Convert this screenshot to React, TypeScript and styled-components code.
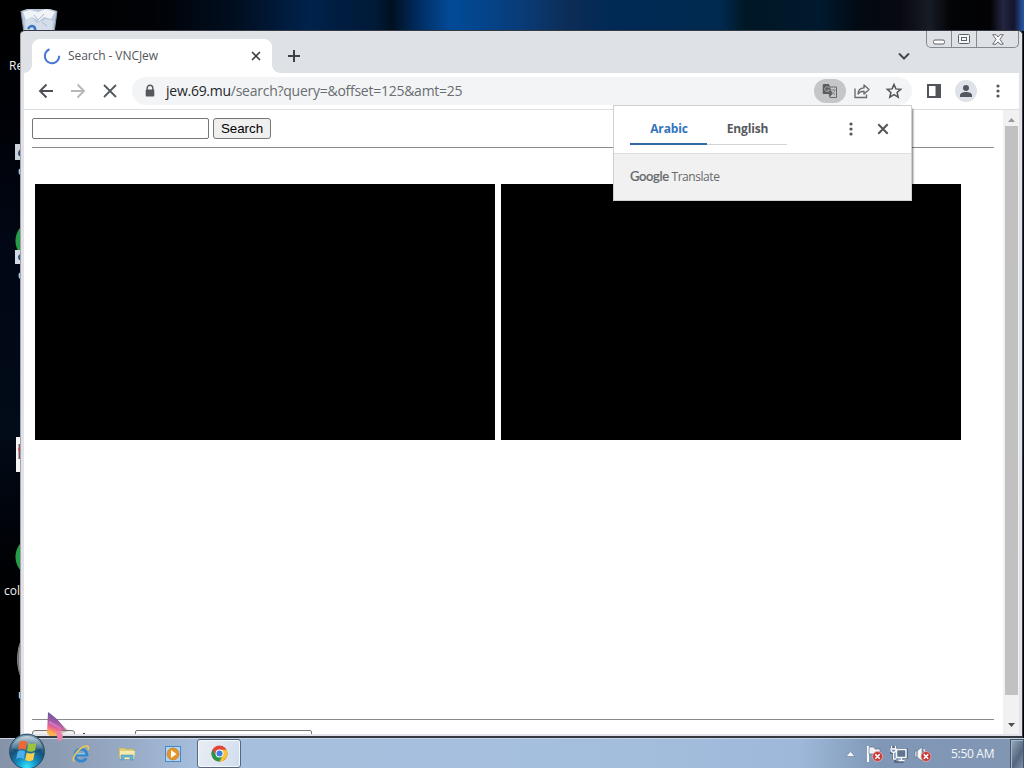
import React from "react";
import styled, { createGlobalStyle } from "styled-components";

const Global = createGlobalStyle`
  * { box-sizing: border-box; }
  body { margin: 0; overflow: hidden; font-family: "Open Sans", "Noto Sans", sans-serif; }
  svg { display: block; flex: none; }
`;

const Desktop = styled.div`
  position: relative;
  width: 1024px;
  height: 768px;
  overflow: hidden;
  display: flex;
  flex-direction: column;
  justify-content: flex-end;
  background:
    linear-gradient(90deg, #000 0, #000205 150px, #010e20 235px, #00224c 310px, #001d40 340px, #001a38 375px, #001020 392px, #003068 422px, #034a96 450px, #03458d 480px, #093c78 520px, #0c2c56 570px, #002a55 610px, #012a4f 720px, #001726 745px, #00192d 820px, #020a12 860px, #080810 900px, #171c24 930px, #030406 950px, #020204 990px, #242540 1003px, #14142c 1014px, #2453a0 1023px) 0 0 / 1024px 31px no-repeat,
    linear-gradient(#000 0, #000106 110px, #010714 240px, #020b18 430px, #000309 530px, #000 600px);
`;

const Shortcut = styled.div<{ $x: number; $y: number }>`
  position: absolute;
  left: ${p => p.$x}px;
  top: ${p => p.$y}px;
  color: #f4f4f4;
  font-size: 12px;
  line-height: 16px;
  white-space: nowrap;
`;

const Window = styled.div`
  position: absolute;
  left: 20px;
  top: 30px;
  width: 1003px;
  height: 708px;
  display: flex;
  flex-direction: column;
  padding: 1px 3px 2px 3px;
  background: #e2e3ea;
  border: solid #34393f;
  border-width: 1px 1px 2px 0;
  border-left: 1px solid #a2a4aa;
  border-radius: 5px 5px 0 0;
`;

const TabStrip = styled.div`
  height: 41px;
  flex: none;
  margin: 0 -3px;
  padding: 7px 0 0 11px;
  display: flex;
  background: #dee1e6;
  border-radius: 4px 4px 0 0;
`;

const Tab = styled.div`
  position: relative;
  width: 240px;
  height: 34px;
  border-radius: 8px 8px 0 0;
  background: #fff;
  display: flex;
  align-items: center;
  padding: 0 10px 0 11px;
  color: #53565a;
  font-size: 12px;
  &::before, &::after {
    content: "";
    position: absolute;
    bottom: 0;
    width: 8px;
    height: 8px;
  }
  &::before { left: -8px; background: radial-gradient(circle at 0 0, transparent 7.5px, #fff 8px); }
  &::after { right: -8px; background: radial-gradient(circle at 100% 0, transparent 7.5px, #fff 8px); }
`;

const TabTitle = styled.span`
  flex: 1;
  margin-left: 7px;
  padding-bottom: 1px;
  letter-spacing: -0.08px;
`;

const NewTab = styled.div`
  margin: 10px 0 0 15px;
`;

const TabSearch = styled.div`
  margin: 11px 15px 0 auto;
  width: 14px;
`;

const CaptionButtons = styled.div`
  display: flex;
  width: 93px;
  height: 17px;
  margin: -8px 3px 0 0;
  border: 1px solid #858990;
  border-top: 0;
  border-radius: 0 0 5px 5px;
`;

const CaptionButton = styled.div<{ $w: number }>`
  width: ${p => p.$w}px;
  display: flex;
  justify-content: center;
  align-items: center;
  & + & { border-left: 1px solid #858990; }
`;

const Toolbar = styled.div`
  height: 37px;
  flex: none;
  display: flex;
  align-items: center;
  background: #fff;
  border-bottom: 1px solid #dcdee2;
  padding: 0 19px 0 12px;
`;

const NavButtons = styled.div`
  display: flex;
  gap: 12px;
  width: 96px;
  flex: none;
`;

const Omnibox = styled.div`
  width: 780px;
  flex: none;
  height: 28px;
  border-radius: 14px;
  background: #f2f4f5;
  display: flex;
  align-items: center;
  padding: 0 9px 0 12px;
  color: #6a6d71;
  font-size: 14px;
`;

const Url = styled.span`
  flex: 1;
  margin-left: 10px;
  padding-bottom: 1px;
  letter-spacing: -0.26px;
  b { font-weight: 400; color: #25272a; }
`;

const TranslatePill = styled.div`
  width: 32px;
  height: 24px;
  border-radius: 12px;
  background: #c4c6c7;
  display: flex;
  align-items: center;
  justify-content: center;
  margin-right: 7px;
`;

const ToolbarActions = styled.div`
  flex: 1;
  display: flex;
  align-items: center;
  padding-left: 14px;
`;

const Avatar = styled.div`
  width: 22px;
  height: 22px;
  border-radius: 50%;
  background: #dfe2e9;
  display: flex;
  align-items: center;
  justify-content: center;
  margin: 0 19px 0 13px;
`;

const Viewport = styled.div`
  flex: 1;
  min-height: 0;
  display: flex;
  background: #fff;
`;

const Page = styled.div`
  flex: 1;
  overflow: hidden;
  padding: 8px 9px 0 8px;
  font-family: "Liberation Sans", sans-serif;
`;

const Form = styled.div`
  display: flex;
  align-items: flex-start;
  gap: 4px;
  height: 21px;
`;

const Field = styled.div`
  width: 177px;
  height: 21px;
  border: 1px solid #767676;
  border-radius: 2px;
  background: #fff;
`;

const Button = styled.div<{ $w: number }>`
  width: ${p => p.$w}px;
  height: 21px;
  border: 1px solid #767676;
  border-radius: 3px;
  background: #efefef;
  color: #000;
  font-size: 13.33px;
  line-height: 19px;
  text-align: center;
`;

const Rule = styled.div<{ $flush?: boolean }>`
  height: 1px;
  background: #8a8a8a;
  margin-top: ${p => (p.$flush ? 0 : 8)}px;
`;

const Shots = styled.div`
  display: flex;
  gap: 6px;
  height: 571px;
  padding: 36px 0 0 3px;
`;

const Shot = styled.div`
  width: 460px;
  height: 256px;
  background: #000;
`;

const Pager = styled.div`
  display: flex;
  padding-top: 10px;
`;

const PagerMark = styled.span`
  width: 2px;
  height: 2px;
  margin: 3px 50px 0 8px;
  background: #444;
`;

const Scrollbar = styled.div`
  width: 16px;
  display: flex;
  flex-direction: column;
  align-items: center;
  background: #f1f1f1;
  padding: 7px 0 7px;
`;

const Thumb = styled.div`
  width: 13px;
  height: 569px;
  margin: 4px 0 auto;
  background: #c1c1c1;
`;

const Popup = styled.div`
  position: absolute;
  left: 613px;
  top: 105px;
  width: 299px;
  height: 96px;
  background: #f1f1f1;
  border: 1px solid #cfcfcf;
  box-shadow: 2px 3px 2px -1px rgba(0, 0, 0, 0.55);
`;

const PopupHeader = styled.div`
  height: 48px;
  display: flex;
  align-items: center;
  padding: 0 22px 1px 16px;
  background: #fff;
  border-bottom: 1px solid #dedede;
`;

const Lang = styled.div<{ $active?: boolean; $w: number }>`
  width: ${p => p.$w}px;
  height: 32px;
  border-bottom: ${p => (p.$active ? "2px solid #326ba4" : "1px solid #d5d5d5")};
  color: ${p => (p.$active ? "#3275bd" : "#56595d")};
  font-size: 12px;
  font-weight: 700;
  line-height: 32px;
  text-align: center;
  letter-spacing: -0.15px;
  padding-left: 1px;
`;

const PopupActions = styled.div`
  margin-left: auto;
  display: flex;
  align-items: center;
  gap: 24px;
`;

const Brand = styled.div`
  padding: 13px 0 0 16px;
  color: #66696c;
  font-size: 12px;
  line-height: 18px;
  letter-spacing: -0.45px;
  b { font-weight: 500; font-family: Lato, sans-serif; font-size: 13px; letter-spacing: -0.35px; -webkit-text-stroke: 0.2px #66696c; }
`;

const Taskbar = styled.div`
  height: 30px;
  display: flex;
  align-items: center;
  padding-left: 62px;
  border-top: 1px solid #c7d4e4;
  background: linear-gradient(90deg, #8493a8 0, #8c9cb3 60px, #9aaec9 140px, #a6bfdd 200px, #a6bfde 480px, #a3bddd 640px, #9db8d9 800px, #8097b7 880px, #8196b3 1010px);
`;

const TaskButton = styled.div<{ $active?: boolean; $w: number }>`
  width: ${p => p.$w}px;
  height: 29px;
  display: flex;
  align-items: center;
  justify-content: center;
  ${p => p.$active && `
    margin-left: 5px;
    border: 1px solid #56677e;
    border-radius: 3px;
    background: linear-gradient(110deg, #e9edf4, #dce5f1 60%, #cfdcec);
    box-shadow: inset 0 0 0 1px #f6f9fc;
  `}
`;

const Tray = styled.div`
  margin-left: auto;
  display: flex;
  align-items: center;
  height: 29px;
`;

const TrayIcons = styled.div`
  display: flex;
  gap: 6px;
  margin-left: 10px;
`;

const Clock = styled.span`
  width: 44px;
  margin: 0 15px 0 19px;
  color: #f5f8fb;
  font-size: 12px;
  letter-spacing: -0.3px;
  white-space: nowrap;
`;

const ShowDesktop = styled.div`
  width: 14px;
  height: 30px;
  border: 1px solid #42536a;
  box-shadow: inset 1px 1px 0 #a5b7cb;
  background: linear-gradient(120deg, #9aabbe, #53677f 60%, #7e91a8);
`;

const StartOrb = styled.div`
  position: absolute;
  left: 8px;
  top: 733px;
`;

const Cursor = styled.div`
  position: absolute;
  left: 47px;
  top: 711px;
`;

const BadIcon = ({ x, y }: { x: number; y: number }) => (
  <g transform={`translate(${x} ${y})`}>
    <circle r="5" fill="#c83a3a" stroke="#e9b0ae" strokeWidth=".8" />
    <path d="M-2.2-2.2 2.2 2.2M2.2-2.2-2.2 2.2" stroke="#fff" strokeWidth="1.6" />
  </g>
);

const Dots = () => (
  <svg width="4" height="14" viewBox="0 0 4 14" fill="#53565a">
    <circle cx="2" cy="2" r="1.6" /><circle cx="2" cy="7" r="1.6" /><circle cx="2" cy="12" r="1.6" />
  </svg>
);

const RecycleBin = () => (
  <svg width="38" height="25" viewBox="0 0 38 25">
    <path d="M1 3 7 1 30 1 37 3 34 25H4Z" fill="#b9c7da" />
    <path d="M3 4 10 2 18 4 26 1 35 4 31 11 24 9 19 13 12 9 6 12Z" fill="#f0f4f8" />
    <path d="M5 12 12 10 17 15 26 11 33 13 32 25H6Z" fill="#d4deeb" />
    <path d="M8 21C11 16 16 18 15 23" stroke="#3d74c7" strokeWidth="2.5" fill="none" />
    <path d="M14 7 18 12 24 6M22 14 27 18" stroke="#a9b8cb" fill="none" />
    <path d="M1 3 4 25M37 3 34 25" stroke="#8896aa" fill="none" />
  </svg>
);

const GreenDisc = ({ badge }: { badge?: boolean }) => (
  <svg width="8" height="44" viewBox="0 0 8 44">
    <path d="M8 0C-1 7-3 22 8 32Z" fill="#269b48" />
    <path d="M8 0 4 5 8 7Z" fill="#a18163" />
    {badge && <g><path d="M0 25H8V39H0Z" fill="#d3dae3" /><path d="M8 28C3 29 2 32 4 35H8Z" fill="#34557d" /></g>}
  </svg>
);

export default function App() {
  return (
    <Desktop>
      <Global />
      <Shortcut $x={20} $y={8}><RecycleBin /></Shortcut>
      <Shortcut $x={9} $y={58}>Recycle Bin</Shortcut>
      <Shortcut $x={15} $y={144}>
        <svg width="8" height="16"><path d="M0 0H8V16H0Z" fill="#cbd1d9" /><path d="M8 4C3 5 2 10 4 12H8Z" fill="#304866" /></svg>
      </Shortcut>
      <Shortcut $x={18} $y={163}>c</Shortcut>
      <Shortcut $x={15} $y={225}><GreenDisc badge /></Shortcut>
      <Shortcut $x={18} $y={267}>c</Shortcut>
      <Shortcut $x={16} $y={437}>
        <svg width="7" height="35"><path d="M0 0H7V35H0Z" fill="#f5f5f5" /><path d="M2.5 7H7V22H2.5Z" fill="#7b5864" /><path d="M2.5 11H7V14H2.5Z" fill="#b93c45" /></svg>
      </Shortcut>
      <Shortcut $x={15} $y={541}><GreenDisc /></Shortcut>
      <Shortcut $x={4} $y={583}>color</Shortcut>
      <Shortcut $x={16} $y={639}>
        <svg width="8" height="40"><path d="M8 0C-1 2-1 38 8 40Z" fill="#aeb0b1" /><path d="M4 4C2 10 2 30 4 36" stroke="#666" fill="none" /></svg>
      </Shortcut>
      <Shortcut $x={18} $y={687}>u</Shortcut>

      <Window>
        <TabStrip>
          <Tab>
            <svg width="18" height="18" viewBox="0 0 18 18" fill="none"><path d="M16.2 8.8A7.2 7.2 0 1 1 6.5 2.3" stroke="#4577d6" strokeWidth="2" /></svg>
            <TabTitle>Search - VNCJew</TabTitle>
            <svg width="12" height="12" viewBox="0 0 12 12" stroke="#3f4246" strokeWidth="1.7"><path d="m2 2 8 8M10 2l-8 8" /></svg>
          </Tab>
          <NewTab><svg width="14" height="14" viewBox="0 0 14 14" stroke="#3f4246" strokeWidth="2"><path d="M7 1v12M1 7h12" /></svg></NewTab>
          <TabSearch><svg width="14" height="12" viewBox="0 0 14 12" fill="none" stroke="#45484d" strokeWidth="2"><path d="m2 3.5 5 5 5-5" /></svg></TabSearch>
          <CaptionButtons>
            <CaptionButton $w={24}><svg width="13" height="13" viewBox="0 0 13 13" fill="#fff" stroke="#5c6067"><rect x=".5" y="7" width="11" height="4" rx="1.5" /></svg></CaptionButton>
            <CaptionButton $w={25}><svg width="12" height="10" viewBox="0 0 12 10" fill="#f5f6f8" stroke="#5c6067"><rect x=".5" y=".5" width="11" height="9" rx="1" /><rect x="3.5" y="3.5" width="5" height="3" /></svg></CaptionButton>
            <CaptionButton $w={42}><svg width="12" height="11" viewBox="0 0 12 11" fill="#fff" stroke="#5c6067" strokeWidth=".9"><path d="M.7.7H4L6 3 8 .7h3.3L7.9 5.4l3.4 4.8H8L6 7.8 4 10.2H.7L4.1 5.4Z" /></svg></CaptionButton>
          </CaptionButtons>
        </TabStrip>

        <Toolbar>
          <NavButtons>
            <svg width="20" height="20" viewBox="0 0 20 20" fill="none" stroke="#4c4f53" strokeWidth="1.9"><path d="M17 10H4m6.5-6.5L4 10l6.5 6.5" /></svg>
            <svg width="20" height="20" viewBox="0 0 20 20" fill="none" stroke="#b5b7ba" strokeWidth="1.9"><path d="M3 10h13M9.5 3.5 16 10l-6.5 6.5" /></svg>
            <svg width="20" height="20" viewBox="0 0 20 20" fill="none" stroke="#55585c" strokeWidth="1.8"><path d="m4 4 12 12M16 4 4 16" /></svg>
          </NavButtons>
          <Omnibox>
            <svg width="12" height="14" viewBox="0 0 12 14"><path d="M3.2 6V4a2.8 2.8 0 0 1 5.6 0V6" fill="none" stroke="#55585c" strokeWidth="1.4" /><rect x="1.7" y="5.5" width="8.6" height="7" rx="1" fill="#55585c" /></svg>
            <Url><b>jew.69.mu</b>/search?query=&amp;offset=125&amp;amt=25</Url>
            <TranslatePill>
              <svg width="16" height="16" viewBox="0 0 16 16"><path d="M1.5 1H7l3.2 10H1.5A1 1 0 0 1 .7 10V2Z" fill="#5a5d60" /><path d="M7.5 4H14.5V14.5H8L7 11H10Z" fill="#c4c6c7" stroke="#66696c" /><path d="M7.2 4.8A2.4 2.4 0 1 0 7.4 7H5.3" stroke="#b4b7ba" fill="none" /><path d="M9.5 7h4M11.5 6v1M13 7c-.4 2-1.6 3.2-3 4M10.4 8.7 13 12" stroke="#77797c" fill="none" strokeWidth=".8" /><path d="m8 11-1 3.5L10.3 11" fill="#5a5d60" /></svg>
            </TranslatePill>
            <svg width="18" height="18" viewBox="0 0 18 18" fill="none" stroke="#6a6d71" strokeWidth="1.4"><path d="M2 6.5V15.5H13.5V12.5" /><path d="M5 12C5.2 7.8 7.5 6 11 5.9V3L16 7.5 11 12V9.2C8.3 9.2 6.5 9.7 5 12Z" strokeLinejoin="round" /></svg>
            <svg width="32" height="18" viewBox="-14 0 32 18" fill="none" stroke="#515458" strokeWidth="1.5"><path d="m9 2.5 1.9 4.4 4.8.4-3.6 3.2 1.1 4.7L9 12.7l-4.2 2.5 1.1-4.7-3.6-3.2 4.8-.4Z" /></svg>
          </Omnibox>
          <ToolbarActions>
            <svg width="16" height="16" viewBox="0 0 16 16"><path fill="#515458" fillRule="evenodd" d="M1 1H15V15H1ZM3 3V13H9.5V3Z" /></svg>
            <Avatar><svg width="14" height="14" viewBox="0 0 14 14" fill="#515660"><circle cx="7" cy="4" r="3" /><path d="M1 13v-1.7C1 9.2 4 8 7 8s6 1.2 6 3.3V13Z" /></svg></Avatar>
            <Dots />
          </ToolbarActions>
        </Toolbar>

        <Viewport>
          <Page>
            <Form><Field /><Button $w={58}>Search</Button></Form>
            <Rule />
            <Shots><Shot /><Shot /></Shots>
            <Rule $flush />
            <Pager><Button $w={43} /><PagerMark /><Field /></Pager>
          </Page>
          <Scrollbar>
            <svg width="7" height="5"><path d="M0 5 3.5 1 7 5Z" fill="#979797" /></svg>
            <Thumb />
            <svg width="7" height="4"><path d="M0 0H7L3.5 4Z" fill="#505050" /></svg>
          </Scrollbar>
        </Viewport>
      </Window>

      <Popup>
        <PopupHeader>
          <Lang $active $w={77}>Arabic</Lang>
          <Lang $w={80}>English</Lang>
          <PopupActions>
            <Dots />
            <svg width="12" height="12" viewBox="0 0 12 12" stroke="#515458" strokeWidth="2"><path d="m1.3 1.3 9.4 9.4M10.7 1.3l-9.4 9.4" /></svg>
          </PopupActions>
        </PopupHeader>
        <Brand><b>Google</b> Translate</Brand>
      </Popup>

      <Taskbar>
        <TaskButton $w={38}>
          <svg width="18" height="18" viewBox="0 0 18 18" fill="none"><path d="M4.2 10H15A6 6 0 1 0 14.2 13.2" stroke="#3387cf" strokeWidth="2.8" /><path d="M5 8.8h8" stroke="#a2e0f8" /><path d="M2.2 16.5C-1 13 7 2.5 14 1.2c3-.5 3 1.5 1.8 3.8" stroke="#e5c858" strokeWidth="1.7" /></svg>
        </TaskButton>
        <TaskButton $w={54}>
          <svg width="18" height="16" viewBox="0 0 18 16"><path d="M1 2H6L8 3H16V12H1Z" fill="#dfce7b" stroke="#b8a65c" strokeWidth=".6" /><path d="M2 5H17L16 13H2Z" fill="#f5ebad" /><path d="M3 14V9H15V14H12V11H6V14Z" fill="#67b7d5" stroke="#4c91b4" strokeWidth=".6" /></svg>
        </TaskButton>
        <TaskButton $w={38}>
          <svg width="16" height="16" viewBox="0 0 16 16"><rect x=".5" y=".5" width="15" height="15" fill="#b3d5f5" stroke="#4688c9" /><circle cx="8" cy="8" r="6" fill="#e69425" stroke="#c17a20" strokeWidth=".6" /><path d="M6 4 11.5 8 6 12Z" fill="#fff" /></svg>
        </TaskButton>
        <TaskButton $active $w={44}>
          <svg width="17" height="17" viewBox="0 0 18 18"><circle cx="9" cy="9" r="8.5" fill="#e3463b" /><path d="M1.6 4.8A8.5 8.5 0 0 0 9 17.5L12.7 11 5.3 11Z" fill="#27984a" /><path d="M9 17.5A8.5 8.5 0 0 0 16.4 5H9L12.7 11Z" fill="#f7c52f" /><circle cx="9" cy="9" r="4.2" fill="#fff" /><circle cx="9" cy="9" r="3.2" fill="#397de6" /></svg>
        </TaskButton>
        <Tray>
          <svg width="9" height="6"><path d="M0 5.5 4.5.5 9 5.5Z" fill="#f4f8fa" stroke="#64778f" strokeWidth=".6" /></svg>
          <TrayIcons>
            <svg width="19" height="18" viewBox="0 0 19 18"><path d="M3 1V17" stroke="#f8fafb" strokeWidth="2" /><path d="M4 2 9 2 10 4H15V11H10L9 9H4Z" fill="#edf1f4" stroke="#53657b" strokeWidth=".6" /><BadIcon x={12.5} y={11.5} /></svg>
            <svg width="18" height="18" viewBox="0 0 18 18" fill="none"><path d="M6 4H17V13H13V17H5V14H3V8H1V2H6Z" stroke="#4d5f76" strokeWidth="1.5" /><rect x="6.5" y="4.5" width="9.5" height="8" fill="#60758f" stroke="#f7f9fb" strokeWidth="1.5" /><path d="M8.5 15.5h6M11.5 13v3M3.5 8V14H6M1.5 1V4M5.5 1V4M1 4H6V6Q3.5 9 1 6Z" stroke="#f7f9fb" strokeWidth="1.3" /></svg>
            <svg width="18" height="18" viewBox="0 0 18 18"><path d="M1 6H3V12H1ZM3 6 8 2V16L3 12Z" fill="#f5f8fa" stroke="#5b6d84" strokeWidth=".6" /><path d="M10 4Q12 8 10 12" stroke="#fff" fill="none" /><BadIcon x={12} y={11.5} /></svg>
          </TrayIcons>
          <Clock>5:50 AM</Clock>
          <ShowDesktop />
        </Tray>
      </Taskbar>

      <StartOrb>
        <svg width="38" height="35" viewBox="0 0 38 35">
          <defs>
            <radialGradient id="orb" cx=".5" cy=".95" r=".9"><stop stopColor="#38e4ff" /><stop offset=".3" stopColor="#1595c7" /><stop offset=".65" stopColor="#174f75" /><stop offset="1" stopColor="#7b97ab" /></radialGradient>
            <linearGradient id="gloss" x2="0" y2="1"><stop stopColor="#dce8ef" stopOpacity=".75" /><stop offset="1" stopColor="#86a5b9" stopOpacity=".2" /></linearGradient>
          </defs>
          <circle cx="19" cy="18.5" r="17.4" fill="url(#orb)" stroke="#254962" />
          <path d="M3.5 15A16 16 0 0 1 34.5 15Q19 21 3.5 15Z" fill="url(#gloss)" />
          <path d="M11.5 9Q15 6.5 19 9L17.5 17Q14 14.7 10 17Z" fill="#ed6932" />
          <path d="M20.5 9.7Q24 12 28.5 9.8L27 17.6Q22.5 20 19 17.7Z" fill="#9bc33c" />
          <path d="M9.7 18.5Q13.5 16.2 17.2 18.6L15.7 26Q12 23.7 8.2 26Z" fill="#4eadeb" />
          <path d="M18.7 19.4Q22 21.5 26.7 19.2L25.2 27Q21 29.3 17.2 27Z" fill="#fcce49" />
        </svg>
      </StartOrb>

      <Cursor>
        <svg width="28" height="34" viewBox="0 0 28 34">
          <defs><linearGradient id="pointer" x1=".4" y1="0" x2=".1" y2="1"><stop stopColor="#62549e" /><stop offset=".4" stopColor="#a45ba6" /><stop offset=".65" stopColor="#f0688c" /><stop offset=".85" stopColor="#ffb24c" /></linearGradient></defs>
          <path d="M3 2 22 20 16 22 11 26 2 26Z" fill="#555" opacity=".3" />
          <path d="M1 1 10 8 19 19 12 20 8 25 3 25 0 22Z" fill="url(#pointer)" />
          <path d="M9 21 13 19 16 25 14 30 11 30Z" fill="#f07fa9" />
          <path d="M2 11 8 14 14 18" stroke="#cf78c4" strokeWidth="2" fill="none" />
        </svg>
      </Cursor>
    </Desktop>
  );
}
